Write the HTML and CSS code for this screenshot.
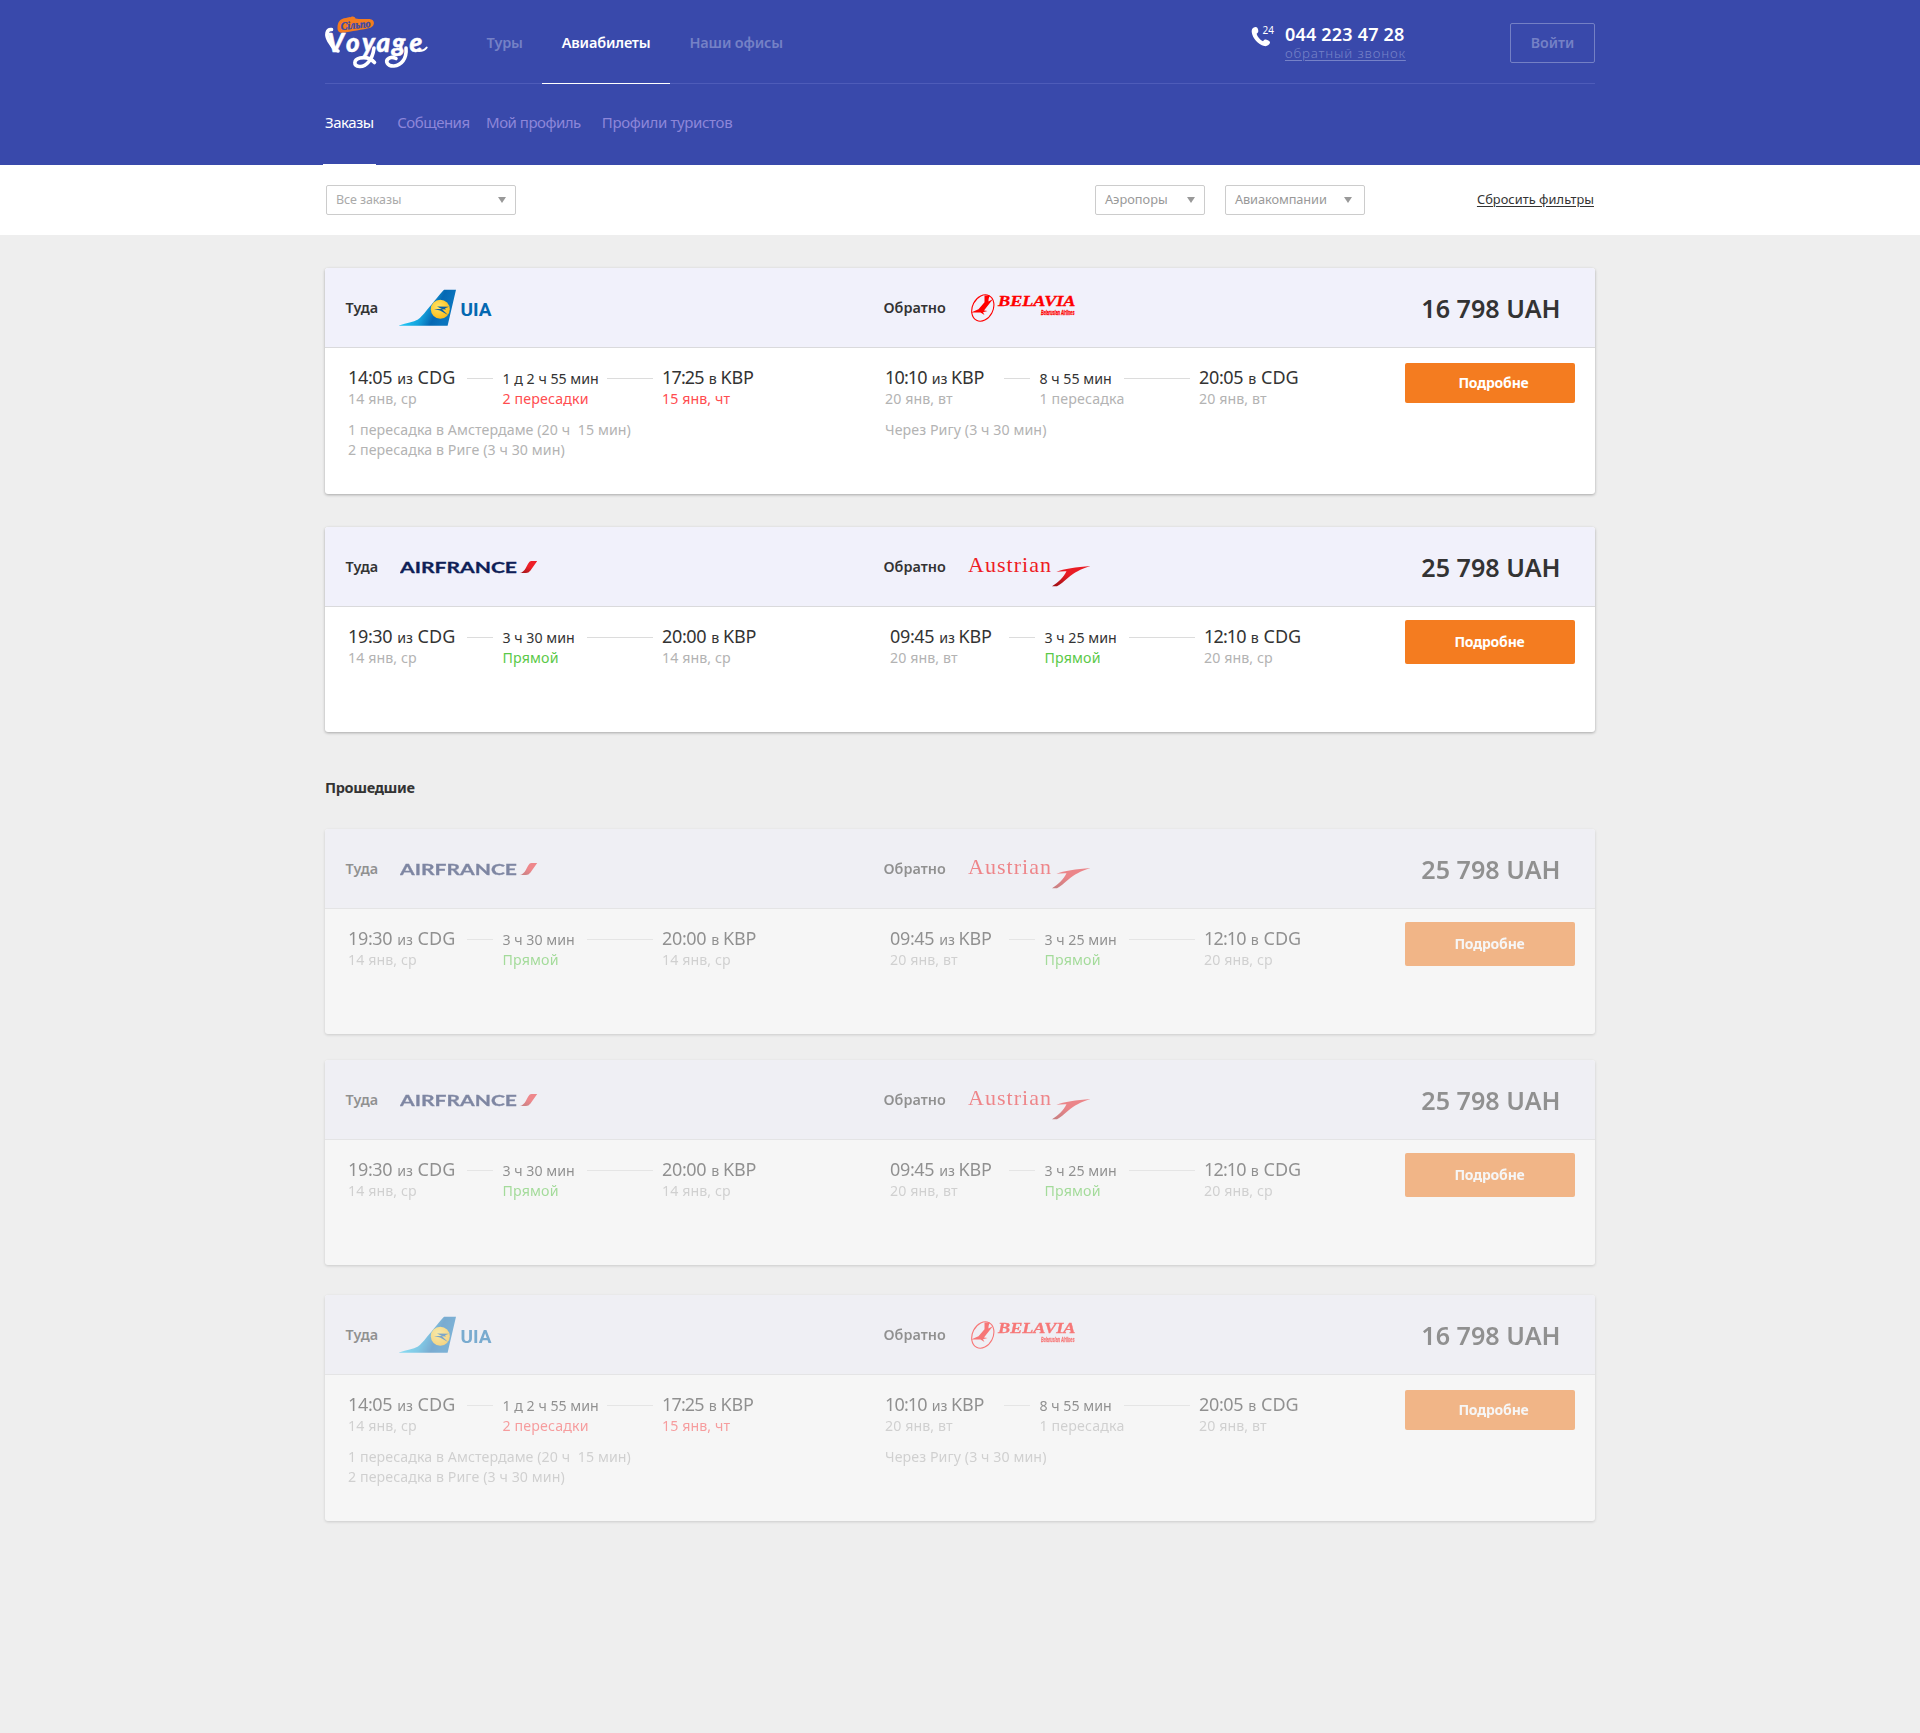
FILE: index.html
```
<!DOCTYPE html>
<html lang="ru">
<head>
<meta charset="utf-8">
<title>Сільпо Voyage — Заказы</title>
<link rel="stylesheet" href="styles.css">
</head>
<body>
<svg class="sprite" aria-hidden="true">
  <defs>
    <linearGradient id="tail" gradientUnits="userSpaceOnUse" x1="15" y1="14" x2="46" y2="28">
      <stop offset="0" stop-color="#1fc0f0"/><stop offset=".35" stop-color="#14a3dd"/><stop offset=".7" stop-color="#0568b3"/><stop offset="1" stop-color="#0a74bd"/>
    </linearGradient>
    <radialGradient id="sun" cx=".4" cy=".35" r=".7">
      <stop offset="0" stop-color="#ffe566"/><stop offset="1" stop-color="#fdb913"/>
    </radialGradient>
    <linearGradient id="flag" x1="0" y1="1" x2=".6" y2="0">
      <stop offset="0" stop-color="#9c1518"/><stop offset=".6" stop-color="#ee2029"/>
    </linearGradient>
    <linearGradient id="arrow" x1="0" y1="1" x2=".6" y2="0">
      <stop offset="0" stop-color="#9c0f14"/><stop offset=".6" stop-color="#e91c24"/>
    </linearGradient>
    <symbol id="uia" viewBox="0 0 94 38">
      <path fill="url(#tail)" d="M0 36.500C8 34 14 33 19 30.500C23 28.500 38 8 45 .8H57L48.600 36.800H0Z"/>
      <circle cx="41.300" cy="20.300" r="9.500" fill="url(#sun)"/>
      <path fill="#0b5fa5" d="M35 20h8l-5-2.500 12 .3-4 1.500 1 1.200-4-.2 6 5.700-8-4.500z"/>
      <text x="61.500" y="27" class="logo-uia" textLength="31" lengthAdjust="spacingAndGlyphs">UIA</text>
    </symbol>
    <symbol id="belavia" viewBox="0 0 106 28">
      <ellipse cx="12.800" cy="14" rx="10.300" ry="13.800" transform="rotate(27 12.800 14)" fill="none" stroke="#f00" stroke-width="1.100"/>
      <path fill="#f00" d="M14.500 1.500h5.500c-1.500 2.500-1.500 4-1.500 6l4.500-2.500-9 11.500 3.500.5-4.500 1.200 1.500 2.800-4-2.500-9.500 0 7.500-3.200 6-7z"/>
      <text x="28" y="11.500" class="logo-bel" textLength="77.500" lengthAdjust="spacingAndGlyphs">BELAVIA</text>
      <text x="71" y="20.500" class="logo-bel-sub" textLength="33.500" lengthAdjust="spacingAndGlyphs">Belarusian Airlines</text>
    </symbol>
    <symbol id="airfrance" viewBox="0 0 138 14">
      <text x="0" y="13" class="logo-af" textLength="117" lengthAdjust="spacingAndGlyphs">AIRFRANCE</text>
      <path fill="url(#flag)" d="M120 13C125 12.500 127 4.500 129.500 1.800Q130.300 1 131.500 1H137.200L130.500 10.500Q128.500 13 126 13Z"/>
    </symbol>
    <symbol id="austrian" viewBox="0 0 124 34">
      <text x="0" y="18" class="logo-au" textLength="83" lengthAdjust="spacing">Austrian</text>
      <path fill="url(#arrow)" d="M88.300 17.800C96 14.500 108 13.500 122.500 12C112 15.500 106 18.500 101 23C96 27.500 92 30.500 89 32.200H84C90 28.500 95.500 23.500 98.500 17.200C95 17 91.500 17.500 88.300 17.800Z"/>
    </symbol>
  </defs>
</svg>

<header class="header">
  <div class="wrap">
    <div class="topbar">
      <a class="logo" href="#" aria-label="Сільпо Voyage">
        <svg width="104" height="56" viewBox="0 0 104 56">
          <path fill="#f47c20" d="M12.500 12C12.500 6 15 2.500 21 2C23.500.8 25 1.500 26 .9C28.500 0 30 1.200 30.500 2.600C36 3.500 41 2.800 44.500 3C50.500 3.600 50 10 45.500 11.700C38 13.700 26 15.300 18 16.700C14 16.900 12.500 15 12.500 12Z"/>
          <text class="logo-badge" x="16" y="14" textLength="30" lengthAdjust="spacingAndGlyphs" transform="rotate(-6 16 14)">Сільпо</text>
          <text class="logo-name" y="36" x="2 21 37 51.500 67 84.500">Voyage</text>
          <path class="swash" d="M6.500 13.500C1.500 13 .5 19 4 25C7 30 9 34 13 35"/>
          <path class="swash" d="M49 32C47.500 44 41 51 34.500 50.500C28 50 28.500 43.500 35 42C41 40.800 46 42.500 49.500 46.500"/>
          <path class="swash" d="M81 32C82 43 76 49.500 69 50C62 50.300 60 45 63.500 42.500C65.500 41 69 41.500 71 42.500"/>
          <path class="tail" d="M94 35C97.500 35 100 34 101.700 31.500"/>
        </svg>
      </a>
      <nav class="nav">
        <a href="#">Туры</a>
        <a href="#" class="active">Авиабилеты</a>
        <a href="#">Наши офисы</a>
      </nav>
      <div class="phone">
        <svg width="34" height="24" viewBox="0 0 34 24">
          <path fill="#fff" d="M.8 6.500C.3 3 2 1.200 4.500.9C6 .8 6.800 2 7.200 4C7.600 6 7 6.700 5.600 7.700C6.300 10.500 9 13.800 12 15.200C13 14 13.800 13.200 15.500 13.700C17.500 14.400 19.300 15.200 19 16.800C18.500 19 16 20.600 13.200 20C7 18.500 1.500 12 .8 6.500Z"/>
          <text class="phone-24" x="11.500" y="8">24</text>
        </svg>
        <div class="phone-text">
          <b>044 223 47 28</b>
          <a href="#">обратный звонок</a>
        </div>
      </div>
      <a class="login" href="#">Войти</a>
    </div>
    <nav class="subnav">
      <a href="#" class="active">Заказы</a>
      <a href="#">Собщения</a>
      <a href="#">Мой профиль</a>
      <a href="#">Профили туристов</a>
    </nav>
  </div>
</header>

<section class="filters">
  <div class="wrap filters-row">
    <div class="select select-orders">Все заказы</div>
    <div class="select select-airports">Аэропоры</div>
    <div class="select select-airlines">Авиакомпании</div>
    <a class="reset" href="#">Сбросить фильтры</a>
  </div>
</section>

<main class="wrap">
  <article class="card card-tall">
    <header class="card-head">
      <div class="dir">Туда<svg class="l-uia"><use href="#uia"/></svg></div>
      <div class="dir">Обратно<svg class="l-belavia"><use href="#belavia"/></svg></div>
      <div class="price">16 798 UAH</div>
    </header>
    <div class="card-body">
      <div class="leg">
        <div class="route route-long">
          <div class="point"><span class="time">14:05</span><small>из</small><span>CDG</span></div><i></i><div class="dur">1 д 2 ч 55 мин</div><i></i><div class="point"><span class="time tight">17:25</span><small>в</small><span class="kbp">KBP</span></div>
          <div class="meta from">14 янв, ср</div><div class="meta via bad">2 пересадки</div><div class="meta bad">15 янв, чт</div>
        </div>
        <p class="stops">1 пересадка в Амстердаме (20 ч&nbsp; 15 мин)<br>2 пересадка в Риге (3 ч 30 мин)</p>
      </div>
      <div class="leg">
        <div class="route">
          <div class="point"><span class="time tight">10:10</span><small>из</small><span class="kbp">KBP</span></div><i></i><div class="dur">8 ч 55 мин</div><i></i><div class="point"><span class="time">20:05</span><small>в</small><span>CDG</span></div>
          <div class="meta from">20 янв, вт</div><div class="meta via">1 пересадка</div><div class="meta">20 янв, вт</div>
        </div>
        <p class="stops">Через Ригу (3 ч 30 мин)</p>
      </div>
      <a class="btn" href="#">Подробне</a>
    </div>
  </article>

  <article class="card">
    <header class="card-head">
      <div class="dir">Туда<svg class="l-airfrance"><use href="#airfrance"/></svg></div>
      <div class="dir">Обратно<svg class="l-austrian"><use href="#austrian"/></svg></div>
      <div class="price">25 798 UAH</div>
    </header>
    <div class="card-body">
      <div class="leg">
        <div class="route">
          <div class="point"><span class="time">19:30</span><small>из</small><span>CDG</span></div><i></i><div class="dur">3 ч 30 мин</div><i></i><div class="point"><span class="time">20:00</span><small>в</small><span class="kbp">KBP</span></div>
          <div class="meta from">14 янв, ср</div><div class="meta via good">Прямой</div><div class="meta">14 янв, ср</div>
        </div>
      </div>
      <div class="leg">
        <div class="route">
          <div class="point"><span class="time">09:45</span><small>из</small><span class="kbp">KBP</span></div><i></i><div class="dur">3 ч 25 мин</div><i></i><div class="point"><span class="time tight">12:10</span><small>в</small><span>CDG</span></div>
          <div class="meta from">20 янв, вт</div><div class="meta via good">Прямой</div><div class="meta">20 янв, ср</div>
        </div>
      </div>
      <a class="btn" href="#">Подробне</a>
    </div>
  </article>

  <h2 class="past-title">Прошедшие</h2>

  <article class="card past">
    <header class="card-head">
      <div class="dir">Туда<svg class="l-airfrance"><use href="#airfrance"/></svg></div>
      <div class="dir">Обратно<svg class="l-austrian"><use href="#austrian"/></svg></div>
      <div class="price">25 798 UAH</div>
    </header>
    <div class="card-body">
      <div class="leg">
        <div class="route">
          <div class="point"><span class="time">19:30</span><small>из</small><span>CDG</span></div><i></i><div class="dur">3 ч 30 мин</div><i></i><div class="point"><span class="time">20:00</span><small>в</small><span class="kbp">KBP</span></div>
          <div class="meta from">14 янв, ср</div><div class="meta via good">Прямой</div><div class="meta">14 янв, ср</div>
        </div>
      </div>
      <div class="leg">
        <div class="route">
          <div class="point"><span class="time">09:45</span><small>из</small><span class="kbp">KBP</span></div><i></i><div class="dur">3 ч 25 мин</div><i></i><div class="point"><span class="time tight">12:10</span><small>в</small><span>CDG</span></div>
          <div class="meta from">20 янв, вт</div><div class="meta via good">Прямой</div><div class="meta">20 янв, ср</div>
        </div>
      </div>
      <a class="btn" href="#">Подробне</a>
    </div>
  </article>

  <article class="card past">
    <header class="card-head">
      <div class="dir">Туда<svg class="l-airfrance"><use href="#airfrance"/></svg></div>
      <div class="dir">Обратно<svg class="l-austrian"><use href="#austrian"/></svg></div>
      <div class="price">25 798 UAH</div>
    </header>
    <div class="card-body">
      <div class="leg">
        <div class="route">
          <div class="point"><span class="time">19:30</span><small>из</small><span>CDG</span></div><i></i><div class="dur">3 ч 30 мин</div><i></i><div class="point"><span class="time">20:00</span><small>в</small><span class="kbp">KBP</span></div>
          <div class="meta from">14 янв, ср</div><div class="meta via good">Прямой</div><div class="meta">14 янв, ср</div>
        </div>
      </div>
      <div class="leg">
        <div class="route">
          <div class="point"><span class="time">09:45</span><small>из</small><span class="kbp">KBP</span></div><i></i><div class="dur">3 ч 25 мин</div><i></i><div class="point"><span class="time tight">12:10</span><small>в</small><span>CDG</span></div>
          <div class="meta from">20 янв, вт</div><div class="meta via good">Прямой</div><div class="meta">20 янв, ср</div>
        </div>
      </div>
      <a class="btn" href="#">Подробне</a>
    </div>
  </article>

  <article class="card card-tall past">
    <header class="card-head">
      <div class="dir">Туда<svg class="l-uia"><use href="#uia"/></svg></div>
      <div class="dir">Обратно<svg class="l-belavia"><use href="#belavia"/></svg></div>
      <div class="price">16 798 UAH</div>
    </header>
    <div class="card-body">
      <div class="leg">
        <div class="route route-long">
          <div class="point"><span class="time">14:05</span><small>из</small><span>CDG</span></div><i></i><div class="dur">1 д 2 ч 55 мин</div><i></i><div class="point"><span class="time tight">17:25</span><small>в</small><span class="kbp">KBP</span></div>
          <div class="meta from">14 янв, ср</div><div class="meta via bad">2 пересадки</div><div class="meta bad">15 янв, чт</div>
        </div>
        <p class="stops">1 пересадка в Амстердаме (20 ч&nbsp; 15 мин)<br>2 пересадка в Риге (3 ч 30 мин)</p>
      </div>
      <div class="leg">
        <div class="route">
          <div class="point"><span class="time tight">10:10</span><small>из</small><span class="kbp">KBP</span></div><i></i><div class="dur">8 ч 55 мин</div><i></i><div class="point"><span class="time">20:05</span><small>в</small><span>CDG</span></div>
          <div class="meta from">20 янв, вт</div><div class="meta via">1 пересадка</div><div class="meta">20 янв, вт</div>
        </div>
        <p class="stops">Через Ригу (3 ч 30 мин)</p>
      </div>
      <a class="btn" href="#">Подробне</a>
    </div>
  </article>
</main>
</body>
</html>
```

FILE: styles.css
```
* { box-sizing: border-box; }
body {
  margin: 0;
  min-height: 1733px;
  background: #eee;
  color: #333;
  font: 14.2px/20px "Noto Sans", "Open Sans", sans-serif;
}
a { color: inherit; text-decoration: none; }
.sprite { position: absolute; width: 0; height: 0; }
.wrap { width: 1270px; margin: 0 auto; }

/* Header */
.header { height: 165px; background: #3949ab; color: #fff; }
.topbar { display: flex; height: 84px; box-shadow: inset 0 -1px #4e5cb9; }
.logo { width: 104px; height: 56px; margin-top: 16px; }
.logo svg { display: block; overflow: visible; }
.logo-name { font: italic 900 26px "Lato", sans-serif; fill: #fff; stroke: #fff; stroke-width: .5px; }
.logo-badge { font: italic 700 11px "Liberation Serif", serif; fill: #3949ab; stroke: #3949ab; stroke-width: .4px; }
.swash { fill: none; stroke: #fff; stroke-width: 3.6px; stroke-linecap: round; }
.tail { fill: none; stroke: #fff; stroke-width: 2px; stroke-linecap: round; }
.nav { display: flex; margin-left: 38px; }
.nav a { padding: 0 19.5px; font-size: 14.5px; font-weight: 600; letter-spacing: -.17px; line-height: 84px; color: #7581c6; }
.nav .active { color: #fff; box-shadow: inset 0 -1px #fff; }
.phone { display: flex; margin: 24px 0 0 auto; }
.phone svg { margin-top: 2px; overflow: visible; }
.phone-24 { font: 10px "Noto Sans", sans-serif; fill: #fff; }
.phone-text { width: 120px; white-space: nowrap; }
.phone-text b { display: block; font-size: 18px; font-weight: 600; letter-spacing: .2px; line-height: 20px; }
.phone-text a { display: block; font-size: 13.3px; font-weight: 300; letter-spacing: .85px; line-height: 18px; color: #7682c8; text-decoration: underline; text-underline-offset: 2px; }
.login { width: 85px; height: 40px; margin: 23px 0 0 105px; border: 1px solid #7480c5; border-radius: 2px; text-align: center; line-height: 38px; font-weight: 600; color: #7581c6; }
.subnav { display: flex; height: 81px; font-size: 15px; letter-spacing: -.5px; line-height: 76px; color: #8d86d9; }
.subnav a { margin-left: 21.5px; }
.subnav a:nth-child(3) { margin-left: 16.5px; }
.subnav a:nth-child(4) { margin-left: 21px; letter-spacing: -.35px; }
.subnav .active { margin-left: -2px; padding: 0 2px; color: #fff; box-shadow: inset 0 -1px #fff; }

/* Filters */
.filters { background: #fff; }
.filters-row { display: flex; align-items: center; height: 70px; padding: 0 1px; font-size: 12.8px; }
.select { display: flex; justify-content: space-between; height: 30px; padding: 0 9px; border: 1px solid #ccc; border-radius: 2px; line-height: 27px; color: #999; }
.select::after { content: ""; margin-top: 11px; height: 0; border: 4px solid transparent; border-top: 6px solid #999; border-bottom: 0; }
.select-orders { width: 190px; font-size: 12.5px; letter-spacing: -.1px; color: #aaa; }
.select-airports { width: 110px; margin-left: auto; }
.select-airlines { width: 140px; margin-left: 20px; padding-right: 12px; letter-spacing: -.1px; }
.reset { margin-left: 112px; margin-top: -2px; letter-spacing: .05px; text-decoration: underline; text-underline-offset: 2px; }

/* Cards */
.card { height: 205px; margin-top: 33px; background: #fff; border-radius: 3px; box-shadow: 0 1px 3px rgba(0, 0, 0, .3); overflow: hidden; }
.card-tall { height: 226px; }
.card-head { display: grid; grid-template-columns: 538px 1fr auto; align-items: center; height: 80px; padding: 0 34.5px 0 20.5px; background: #f1f1fb; border-bottom: 1px solid #dadadc; }
.dir { display: flex; align-items: center; height: 79px; font-size: 14.4px; font-weight: 600; }
.price { font-size: 25.1px; font-weight: 600; line-height: 34px; padding-top: 1px; }
.l-uia { width: 94px; height: 38px; margin-left: 20.5px; }
.l-belavia { width: 106px; height: 28px; margin-left: 24.5px; }
.l-airfrance { width: 138px; height: 14px; margin-left: 22px; }
.l-austrian { width: 124px; height: 34px; margin: 9px 0 0 22.5px; }
.logo-uia { font: 700 19px "Roboto", sans-serif; fill: #0468b1; }
.logo-bel { font: italic 700 15px "Liberation Serif", serif; fill: #f00; stroke: #f00; stroke-width: .3px; }
.logo-bel-sub { font: italic 700 6.5px "Liberation Sans", sans-serif; fill: #f00; stroke: #f00; stroke-width: .3px; }
.logo-af { font: 700 15.5px "Lato", sans-serif; fill: #0f1f57; stroke: #0f1f57; stroke-width: .3px; }
.logo-au { font: 22px "Liberation Serif", serif; fill: #ee1c24; }

.card-body { display: flex; padding: 13px 20px 0 23px; }
.card-tall .card-body { padding-top: 15px; }
.leg { width: 542px; padding-top: 6px; flex: none; }
.card-tall .leg { width: 537px; padding-top: 4px; }
.leg + .leg, .card-tall .leg + .leg { width: auto; }
.route { display: grid; grid-template-columns: 119px 35.5px 84.5px 75px 110px; row-gap: 2px; white-space: nowrap; }
.route-long { grid-template-columns: 119px 35.5px 104.5px 55px 110px; }
.route i { height: 1px; margin: 11px 9.5px 0 0; background: #dcdcdc; }
.route i:nth-of-type(2) { margin-right: 9px; }
.point { display: flex; gap: 5px; align-items: baseline; height: 20px; font-size: 18px; }
.time { letter-spacing: -.35px; }
.time.tight { letter-spacing: -.85px; }
.kbp { margin-left: -1px; letter-spacing: -.2px; }
.point small { font-size: 14.2px; letter-spacing: -.2px; }
.dur { height: 20px; padding-top: 2px; }
.meta { color: #b3b3b3; letter-spacing: .08px; }
.from, .via { grid-column: span 2; }
.via { letter-spacing: .15px; }
.good { color: #5bc948; }
.bad { color: #ff4c4f; }
.stops { margin: 11px 0 0 0; color: #b3b3b3; letter-spacing: .08px; }
.btn { width: 170px; height: 44px; margin-left: auto; border-radius: 2px; background: #f47c20; color: #fff; font-size: 14px; font-weight: 700; letter-spacing: -.2px; line-height: 44px; text-align: center; padding-right: 1px; }
.card-tall .btn { height: 40px; padding-left: 8px; line-height: 40px; }

.past-title { margin: 45px 0 32px 0; font-size: 14.5px; font-weight: 700; letter-spacing: -.35px; line-height: 20px; }
.past { opacity: .5; margin-top: 26px; }
.past-title + .past { margin-top: 0; }
.card-tall.past { margin-top: 30px; }
```
